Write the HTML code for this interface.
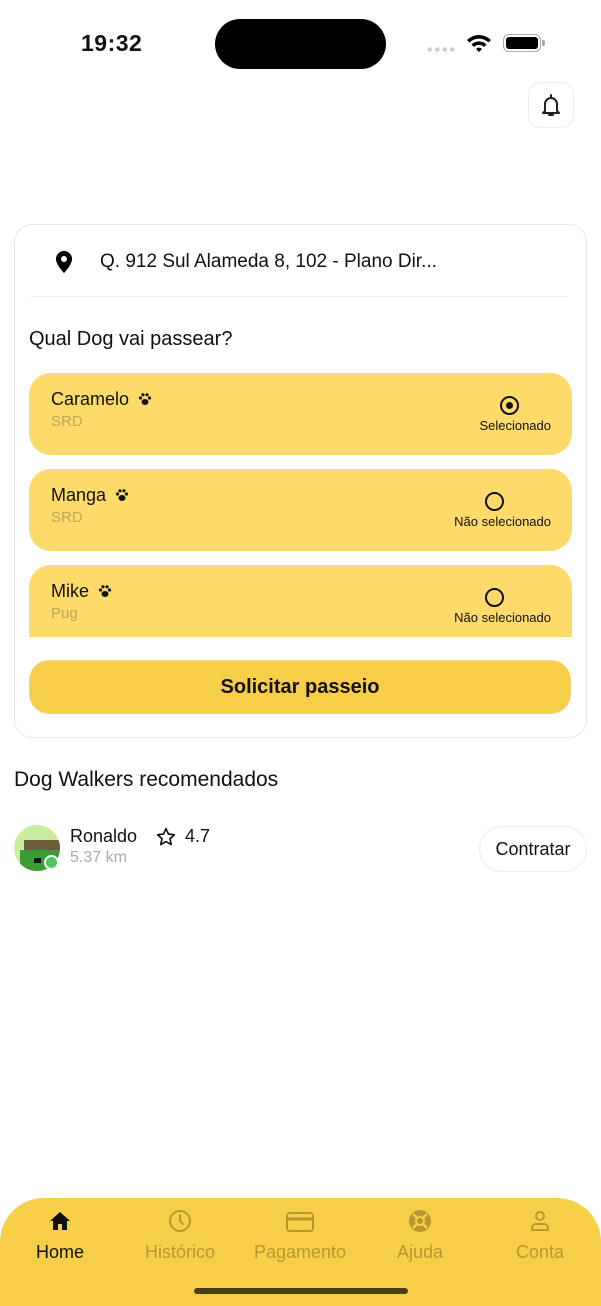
<!DOCTYPE html>
<html><head><meta charset="utf-8"><style>
*{margin:0;padding:0;box-sizing:border-box}
body{width:601px;height:1306px;background:#fff;font-family:"Liberation Sans",Arial,sans-serif;position:relative;overflow:hidden;color:#111}
.a{position:absolute}
.dog{position:absolute;left:29px;width:543px;height:82px;background:#FDDA6A;border-radius:22px}
.dog .n{position:absolute;left:22px;top:16px;font-size:18px;color:#111}
.dog .b{position:absolute;left:22px;top:40px;font-size:15px;color:#b9a65a}
.dog .r{position:absolute;right:21px;top:45px;font-size:13px;color:#111;text-align:center}
.dog .c{position:absolute;width:19px;height:19px;border:2.5px solid #111;border-radius:50%}
.paw{display:inline-block;vertical-align:middle;margin-left:4px;margin-top:-3px}
.nav{position:absolute;left:0;top:1198px;width:601px;height:108px;background:#F7CE48;border-radius:44px 44px 0 0}
.ni{position:absolute;top:44px;width:120px;text-align:center;font-size:18px;color:#b8972e}
</style></head><body>
<div class="a" style="left:81px;top:30px;font-size:23px;font-weight:bold;letter-spacing:0.5px">19:32</div>
<div class="a" style="left:215px;top:19px;width:171px;height:50px;background:#000;border-radius:25px"></div>
<div class="a" style="left:426px;top:47px;width:30px;height:5px;background:radial-gradient(circle,#ccc 2px,transparent 2.5px) 0 0/7.5px 5px"></div>
<svg class="a" style="left:465px;top:32px" width="28" height="22" viewBox="0 0 28 22"><path d="M2 8a17 17 0 0 1 24 0l-2.5 2.5a13.5 13.5 0 0 0-19 0z M6.5 12.5a10.5 10.5 0 0 1 15 0l-2.5 2.5a7 7 0 0 0-10 0z M11 17a4 4 0 0 1 6 0l-3 3z" fill="#000"/></svg>
<div class="a" style="left:503px;top:34px;width:38px;height:18px;border:1.5px solid #aaa;border-radius:6px;padding:2px"><div style="width:100%;height:100%;background:#000;border-radius:3px"></div></div>
<div class="a" style="left:542px;top:40px;width:3px;height:6px;background:#aaa;border-radius:0 2px 2px 0"></div>
<div class="a" style="left:528px;top:82px;width:46px;height:46px;border:1px solid #eee;border-radius:12px"></div>
<svg class="a" style="left:539px;top:93px" width="24" height="26" viewBox="0 0 24 26"><path d="M12 2v2 M6 18V11a6 6 0 0 1 12 0v7l2 2H4z M10 22h4" fill="none" stroke="#222" stroke-width="2" stroke-linejoin="round" stroke-linecap="round"/></svg>

<div class="a" style="left:14px;top:224px;width:573px;height:514px;border:1px solid #e8e8e8;border-radius:18px"></div>
<svg class="a" style="left:54px;top:250px" width="20" height="24" viewBox="0 0 20 24"><path d="M10 1a8 8 0 0 0-8 8c0 6 8 14 8 14s8-8 8-14a8 8 0 0 0-8-8z" fill="#000"/><circle cx="10" cy="9" r="3" fill="#fff"/></svg>
<div class="a" style="left:100px;top:251px;font-size:19px">Q. 912 Sul Alameda 8, 102 - Plano Dir...</div>
<div class="a" style="left:31px;top:296px;width:537px;height:1px;background:#eee"></div>
<div class="a" style="left:29px;top:328px;font-size:20px">Qual Dog vai passear?</div>

<div class="dog" style="top:373px"><div class="n">Caramelo <svg class="paw" width="14" height="14" viewBox="0 0 14 14"><ellipse cx="7" cy="10" rx="3.5" ry="3" fill="#111"/><circle cx="2.5" cy="6" r="1.6" fill="#111"/><circle cx="11.5" cy="6" r="1.6" fill="#111"/><circle cx="5" cy="2.8" r="1.6" fill="#111"/><circle cx="9" cy="2.8" r="1.6" fill="#111"/></svg></div><div class="b">SRD</div><div class="c" style="right:53px;top:23px"><div style="width:7px;height:7px;background:#111;border-radius:50%;margin:3.5px"></div></div><div class="r">Selecionado</div></div>
<div class="dog" style="top:469px"><div class="n">Manga <svg class="paw" width="14" height="14" viewBox="0 0 14 14"><ellipse cx="7" cy="10" rx="3.5" ry="3" fill="#111"/><circle cx="2.5" cy="6" r="1.6" fill="#111"/><circle cx="11.5" cy="6" r="1.6" fill="#111"/><circle cx="5" cy="2.8" r="1.6" fill="#111"/><circle cx="9" cy="2.8" r="1.6" fill="#111"/></svg></div><div class="b">SRD</div><div class="c" style="right:68px;top:23px"></div><div class="r">Não selecionado</div></div>
<div class="dog" style="top:565px;height:72px;border-radius:22px 22px 0 0"><div class="n">Mike <svg class="paw" width="14" height="14" viewBox="0 0 14 14"><ellipse cx="7" cy="10" rx="3.5" ry="3" fill="#111"/><circle cx="2.5" cy="6" r="1.6" fill="#111"/><circle cx="11.5" cy="6" r="1.6" fill="#111"/><circle cx="5" cy="2.8" r="1.6" fill="#111"/><circle cx="9" cy="2.8" r="1.6" fill="#111"/></svg></div><div class="b">Pug</div><div class="c" style="right:68px;top:23px"></div><div class="r">Não selecionado</div></div>

<div class="a" style="left:29px;top:660px;width:542px;height:54px;background:#F7CE48;border-radius:20px;border:1px solid #eed68a;text-align:center;line-height:53px;font-size:20px;font-weight:bold">Solicitar passeio</div>

<div class="a" style="left:14px;top:768px;font-size:21px">Dog Walkers recomendados</div>
<div class="a" style="left:14px;top:825px;width:46px;height:46px;border-radius:50%;overflow:hidden;background:#c9ec9e">
<div class="a" style="left:10px;top:15px;width:36px;height:10px;background:#6e5c3c"></div>
<div class="a" style="left:6px;top:25px;width:40px;height:21px;background:#3d9c36"></div>
<div class="a" style="left:20px;top:33px;width:7px;height:5px;background:#111"></div>
</div>
<div class="a" style="left:44px;top:855px;width:15px;height:15px;border-radius:50%;background:#4cc95a;border:2px solid #fff"></div>
<div class="a" style="left:70px;top:826px;font-size:18px">Ronaldo</div>
<svg class="a" style="left:156px;top:827px" width="20" height="20" viewBox="0 0 24 24"><path d="M12 2l3 6.5 7 .8-5.2 4.8 1.5 7L12 17.5 5.7 21.1l1.5-7L2 9.3l7-.8z" fill="none" stroke="#111" stroke-width="2" stroke-linejoin="round"/></svg>
<div class="a" style="left:185px;top:826px;font-size:18px">4.7</div>
<div class="a" style="left:70px;top:849px;font-size:16px;color:#aaa">5.37 km</div>
<div class="a" style="left:479px;top:826px;width:108px;height:46px;border:1px solid #eee;border-radius:23px;text-align:center;line-height:44px;font-size:18px">Contratar</div>

<div class="nav">
<svg class="a" style="left:49px;top:13px" width="22" height="20" viewBox="0 0 22 20"><path d="M11 1L1 10h3v9h5v-6h4v6h5v-9h3z" fill="#111"/></svg>
<svg class="a" style="left:168px;top:11px" width="24" height="24" viewBox="0 0 24 24"><circle cx="12" cy="12" r="10" fill="none" stroke="#b8972e" stroke-width="2"/><path d="M12 6v6l3 3" fill="none" stroke="#b8972e" stroke-width="2" stroke-linecap="round"/></svg>
<svg class="a" style="left:286px;top:14px" width="28" height="20" viewBox="0 0 28 20"><rect x="1" y="1" width="26" height="18" rx="3" fill="none" stroke="#b8972e" stroke-width="2"/><path d="M1 7h26" stroke="#b8972e" stroke-width="3"/></svg>
<svg class="a" style="left:408px;top:11px" width="24" height="24" viewBox="0 0 24 24"><circle cx="12" cy="12" r="11" fill="#b8972e"/><circle cx="12" cy="12" r="5" fill="#F7CE48"/><circle cx="12" cy="12" r="3" fill="#b8972e"/><path d="M5 5l4 4M19 5l-4 4M5 19l4-4M19 19l-4-4" stroke="#F7CE48" stroke-width="2.5"/></svg>
<svg class="a" style="left:530px;top:12px" width="20" height="22" viewBox="0 0 20 22"><circle cx="10" cy="6" r="4" fill="none" stroke="#b8972e" stroke-width="2"/><path d="M2 20v-2a4 4 0 0 1 4-4h8a4 4 0 0 1 4 4v2z" fill="none" stroke="#b8972e" stroke-width="2" stroke-linejoin="round"/></svg>
<div class="ni" style="left:0;color:#111">Home</div>
<div class="ni" style="left:120px">Histórico</div>
<div class="ni" style="left:240px">Pagamento</div>
<div class="ni" style="left:360px">Ajuda</div>
<div class="ni" style="left:480px">Conta</div>
<div class="a" style="left:194px;top:90px;width:214px;height:6px;background:#4a3e14;border-radius:3px"></div>
</div>
</body></html>
